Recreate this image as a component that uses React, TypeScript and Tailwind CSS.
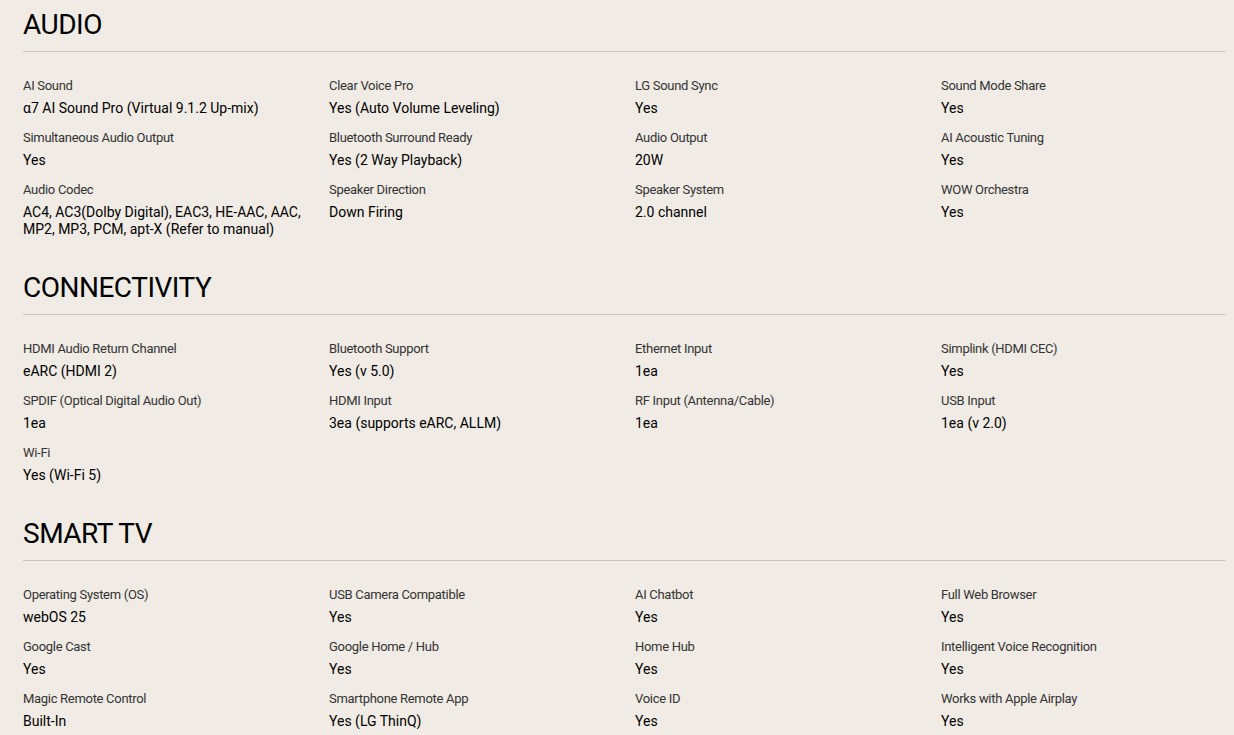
import React from "react";

type Item = [string, string];

const sections: { title: string; items: Item[] }[] = [
  {
    title: "AUDIO",
    items: [
      ["AI Sound", "α7 AI Sound Pro (Virtual 9.1.2 Up-mix)"],
      ["Clear Voice Pro", "Yes (Auto Volume Leveling)"],
      ["LG Sound Sync", "Yes"],
      ["Sound Mode Share", "Yes"],
      ["Simultaneous Audio Output", "Yes"],
      ["Bluetooth Surround Ready", "Yes (2 Way Playback)"],
      ["Audio Output", "20W"],
      ["AI Acoustic Tuning", "Yes"],
      ["Audio Codec", "AC4, AC3(Dolby Digital), EAC3, HE-AAC, AAC, MP2, MP3, PCM, apt-X (Refer to manual)"],
      ["Speaker Direction", "Down Firing"],
      ["Speaker System", "2.0 channel"],
      ["WOW Orchestra", "Yes"],
    ],
  },
  {
    title: "CONNECTIVITY",
    items: [
      ["HDMI Audio Return Channel", "eARC (HDMI 2)"],
      ["Bluetooth Support", "Yes (v 5.0)"],
      ["Ethernet Input", "1ea"],
      ["Simplink (HDMI CEC)", "Yes"],
      ["SPDIF (Optical Digital Audio Out)", "1ea"],
      ["HDMI Input", "3ea (supports eARC, ALLM)"],
      ["RF Input (Antenna/Cable)", "1ea"],
      ["USB Input", "1ea (v 2.0)"],
      ["Wi-Fi", "Yes (Wi-Fi 5)"],
    ],
  },
  {
    title: "SMART TV",
    items: [
      ["Operating System (OS)", "webOS 25"],
      ["USB Camera Compatible", "Yes"],
      ["AI Chatbot", "Yes"],
      ["Full Web Browser", "Yes"],
      ["Google Cast", "Yes"],
      ["Google Home / Hub", "Yes"],
      ["Home Hub", "Yes"],
      ["Intelligent Voice Recognition", "Yes"],
      ["Magic Remote Control", "Built-In"],
      ["Smartphone Remote App", "Yes (LG ThinQ)"],
      ["Voice ID", "Yes"],
      ["Works with Apple Airplay", "Yes"],
    ],
  },
];

export default function App() {
  return (
    <div className="h-[735px] overflow-hidden bg-[#f0ebe4] pl-[23px] pr-[8px] font-['Roboto',sans-serif] text-black">
      {sections.map((s) => (
        <section key={s.title} className="pb-[25px]">
          <h2 className="pt-[8px] pb-[9px] border-b border-[#c9c5bf] text-[28px] leading-[34px] font-normal tracking-[-0.5px]">
            {s.title}
          </h2>
          <div className="grid grid-cols-4 gap-x-[21px] gap-y-[12px] pt-[25px]">
            {s.items.map(([label, value]) => (
              <div key={label}>
                <div className="text-[13px] leading-[18px] tracking-[-0.3px] text-[#333333]">{label}</div>
                <div className="mt-[5px] text-[14px] leading-[17px]">{value}</div>
              </div>
            ))}
          </div>
        </section>
      ))}
    </div>
  );
}
